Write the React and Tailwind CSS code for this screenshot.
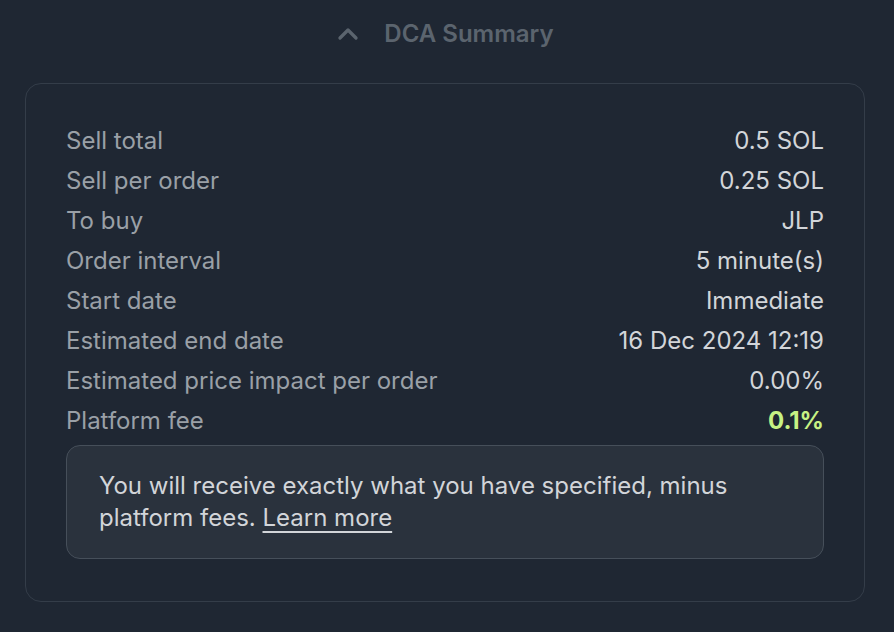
import React from "react";
import { ChevronUp } from "lucide-react";

const rows = [
  { label: "Sell total", value: "0.5 SOL" },
  { label: "Sell per order", value: "0.25 SOL" },
  { label: "To buy", value: "JLP" },
  { label: "Order interval", value: "5 minute(s)" },
  { label: "Start date", value: "Immediate" },
  { label: "Estimated end date", value: "16 Dec 2024 12:19" },
  { label: "Estimated price impact per order", value: "0.00%" },
  { label: "Platform fee", value: "0.1%", accent: true },
];

export default function App() {
  return (
    <div
      className="min-h-[632px] w-full bg-[#1f2733] pl-[25px] pr-[29px] pt-[18px] pb-[30px]"
      style={{ fontFamily: "Inter, 'Noto Sans', sans-serif" }}
    >
      {/* header toggle */}
      <div className="flex items-center justify-center gap-[20px] h-[32px] text-[#5b646e] pr-[4px]">
        <ChevronUp className="w-[32px] h-[32px]" strokeWidth={2.5} />
        <span className="text-[24px] font-semibold leading-[32px]">DCA Summary</span>
      </div>

      {/* summary card */}
      <div className="mt-[33px] rounded-[16px] border border-[#343d49] px-10 pt-[41px] pb-[42px]">
        <div className="flex flex-col gap-2">
          {rows.map((r) => (
            <div
              key={r.label}
              className="flex items-center justify-between text-[24px] leading-[32px]"
            >
              <span className="text-[#9aa0a7]">{r.label}</span>
              <span
                className={
                  r.accent ? "text-[#c7f284] font-bold" : "text-[#d2d5d9]"
                }
              >
                {r.value}
              </span>
            </div>
          ))}
        </div>

        <div className="mt-[8px] rounded-[14px] border border-[#464f5a] bg-[#2a323d] px-8 py-6 text-[24px] leading-[32px] text-[#d2d5d9]">
          You will receive exactly what you have specified, minus platform fees.{" "}
          <a href="#" className="underline underline-offset-[5px]">
            Learn more
          </a>
        </div>
      </div>
    </div>
  );
}
